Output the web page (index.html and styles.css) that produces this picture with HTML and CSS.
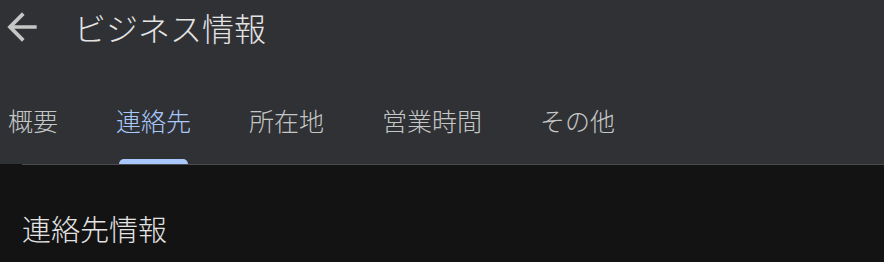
FILE: index.html
```html
<!DOCTYPE html>
<html lang="ja">
<head>
  <meta charset="UTF-8">
  <title>ビジネス情報</title>
  <link rel="stylesheet" href="styles.css">
</head>
<body>

  <div class="cabecalho">
    <div class="barra-topo">
      <svg class="voltar" viewBox="0 0 24 24" width="44" height="44">
        <path d="M20 11H7.83l5.59-5.59L12 4l-8 8 8 8 1.41-1.41L7.83 13H20v-2z" fill="currentColor"/>
      </svg>
      <div class="titulo">ビジネス情報</div>
    </div>

    <div class="abas">
      <div class="aba"><span class="rotulo">概要</span><span class="marca"></span></div>
      <div class="aba ativa"><span class="rotulo">連絡先</span><span class="marca"></span></div>
      <div class="aba"><span class="rotulo">所在地</span><span class="marca"></span></div>
      <div class="aba"><span class="rotulo">営業時間</span><span class="marca"></span></div>
      <div class="aba"><span class="rotulo">その他</span><span class="marca"></span></div>
    </div>
  </div>

  <div class="conteudo">
    <div class="divisor"></div>
    <h2 class="secao">連絡先情報</h2>
  </div>

</body>
</html>
```

FILE: styles.css
```css
body {
  margin: 0;
  background-color: #131313;
  font-family: "Noto Sans CJK JP", "Noto Sans", sans-serif;
  overflow: hidden;
}

.cabecalho {
  background-color: #303135;
}

.barra-topo {
  display: flex;
  align-items: center;
  height: 54px;
}

.voltar {
  color: #c4c7c5;
  margin-left: 0;
  margin-top: 0;
}

.titulo {
  margin-left: 30px;
  font-size: 32px;
  font-weight: 300;
  color: #e3e3e3;
  line-height: 40px;
}

.abas {
  display: flex;
  gap: 58px;
  padding-left: 8px;
  height: 110px;
  align-items: flex-end;
}

.aba {
  display: flex;
  flex-direction: column;
  align-items: center;
}

.rotulo {
  font-size: 25px;
  font-weight: 300;
  line-height: 30px;
  color: #c4c7c5;
  padding-bottom: 24px;
}

/* barrinha embaixo da aba ativa */
.marca {
  display: block;
  width: calc(100% - 6px);
  height: 5px;
  border-radius: 5px 5px 0 0;
}

.aba.ativa .rotulo {
  color: #a8c7fa;
}

.aba.ativa .marca {
  background-color: #a8c7fa;
}

.conteudo {
  background-color: #131313;
}

.divisor {
  height: 1px;
  margin-left: 22px;
  background-color: #4a4b4f;
}

.secao {
  margin: 0;
  padding: 43px 0 0 22px;
  font-size: 29px;
  font-weight: 300;
  line-height: 40px;
  color: #e3e3e3;
}
```
